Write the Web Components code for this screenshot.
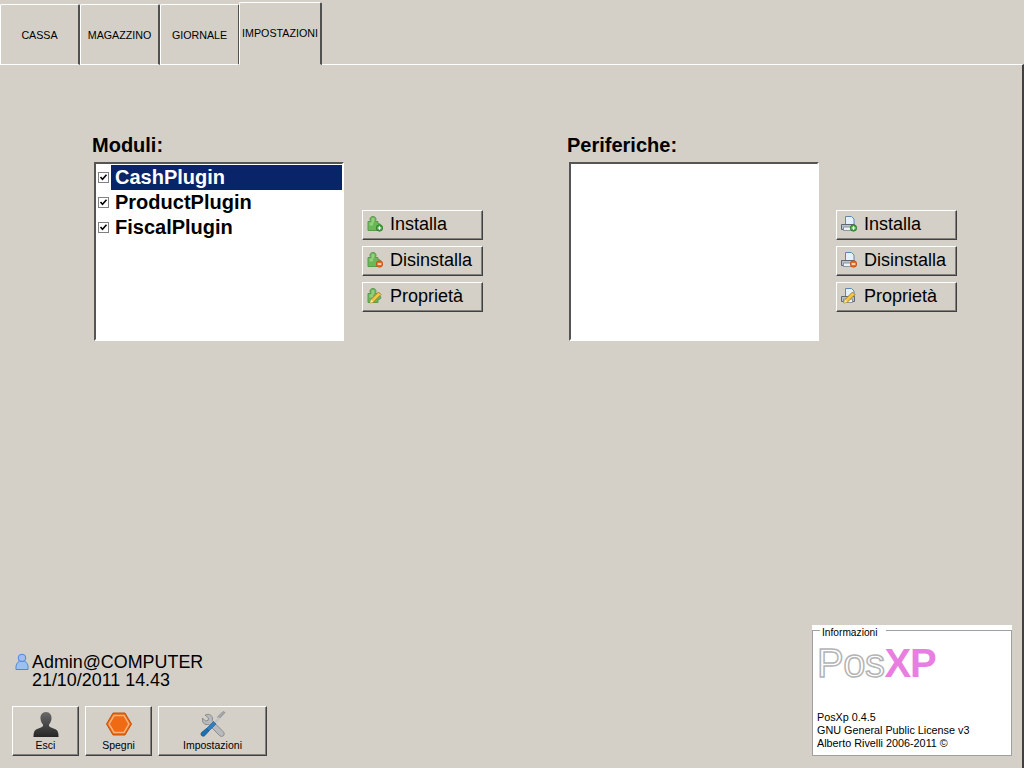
<!DOCTYPE html>
<html>
<head>
<meta charset="utf-8">
<title>PosXp</title>
<style>
    html, body { margin: 0; height: 100%; background: #d4d0c8; overflow: hidden; }
    body { font-family: "Liberation Sans", Arial, sans-serif; color: #000; }
</style>
</head>
<body>

<pos-app>
    <pos-tabs slot="tabs">
        <pos-tab>CASSA</pos-tab>
        <pos-tab>MAGAZZINO</pos-tab>
        <pos-tab>GIORNALE</pos-tab>
        <pos-tab active>IMPOSTAZIONI</pos-tab>
    </pos-tabs>

    <pos-section slot="left" heading="Moduli:">
        <pos-listbox slot="list">
            <pos-list-item selected>CashPlugin</pos-list-item>
            <pos-list-item>ProductPlugin</pos-list-item>
            <pos-list-item>FiscalPlugin</pos-list-item>
        </pos-listbox>
        <pos-button slot="actions" icon="plugin-add">Installa</pos-button>
        <pos-button slot="actions" icon="plugin-del">Disinstalla</pos-button>
        <pos-button slot="actions" icon="plugin-edit">Proprietà</pos-button>
    </pos-section>

    <pos-section slot="right" heading="Periferiche:" style="--actions-gap:17px">
        <pos-listbox slot="list"></pos-listbox>
        <pos-button slot="actions" icon="printer-add">Installa</pos-button>
        <pos-button slot="actions" icon="printer-del">Disinstalla</pos-button>
        <pos-button slot="actions" icon="printer-edit">Proprietà</pos-button>
    </pos-section>

    <pos-status slot="status" user="Admin@COMPUTER" date="21/10/2011 14.43">
        <pos-tool-button icon="user" style="width:67px">Esci</pos-tool-button>
        <pos-tool-button icon="power" style="width:67px">Spegni</pos-tool-button>
        <pos-tool-button icon="tools" style="width:109px">Impostazioni</pos-tool-button>
    </pos-status>

    <pos-info slot="info"></pos-info>
</pos-app>

<script>
const puzzle = `<path d="M1 5.500h2.800c-.8-1.200-1-2.200-.6-3.300.4-1.100 1.500-1.700 2.800-1.700s2.400.6 2.800 1.700c.4 1.100.2 2.100-.6 3.300h2.800v2.500c1-.6 2.800-.5 2.800 1.500s-1.800 2.100-2.800 1.500v3.500h-10z" fill="#6ab858" stroke="#5a9a4c"/>
    <path d="M4.500 2.500c.5-.8 2.500-.8 3 0l-.3 4h-1.200v3h-3.500v-3h2z" fill="#a6d98f" opacity=".7"/>`
const printer = `<path d="M4.500 .5h6l2.500 2.500v6h-8.500z" fill="#e6f0fb" stroke="#5c86bd"/>
    <path d="M.500 8.500h13v5h-13z" fill="#b9c2cf" stroke="#5f6775"/>
    <path d="M2.500 11h9v3.500h-9z" fill="#eef1f5" stroke="#7a808c" stroke-width=".8"/>`
const addBadge = `<circle cx="12.500" cy="12" r="3.200" fill="#43a63a" stroke="#2b7a28" stroke-width=".8"/><path d="M10.700 12h3.600M12.500 10.200v3.600" stroke="#fff" stroke-width="1.200"/>`
const delBadge = `<circle cx="12.500" cy="12" r="3.200" fill="#ef6a1c" stroke="#bf4c0c" stroke-width=".8"/><path d="M10.700 12h3.600" stroke="#fff" stroke-width="1.400"/>`
const pencil = `<path d="M3 15l1-3.500 7.500-7.500 2.500 2.500-7.500 7.500z" fill="#f3c646" stroke="#a27a1c" stroke-width=".9"/><path d="M3 15l1-3.500 2.500 2.500z" fill="#fbe7b5"/>`

const icons16 = {
    'plugin-add': puzzle + addBadge,
    'plugin-del': puzzle + delBadge,
    'plugin-edit': puzzle + pencil,
    'printer-add': printer + addBadge,
    'printer-del': printer + delBadge,
    'printer-edit': printer + pencil,
}

const icons26 = {
    user: `<defs><linearGradient id="u" x1="0" y1="0" x2="0" y2="1"><stop offset="0" stop-color="#6a6a6a"/><stop offset="1" stop-color="#262626"/></linearGradient></defs>
        <path d="M13 1c3.800 0 5.800 3 5.500 6.500-.2 2.300-1 4.500-2.500 6v1.500c1 1.500 4 2 6.500 3.200 2 1 3 2.800 3 7.800h-25c0-5 1-6.800 3-7.800 2.500-1.200 5.500-1.700 6.500-3.200v-1.500c-1.500-1.500-2.300-3.700-2.500-6-.3-3.500 1.700-6.500 5.500-6.500z" fill="url(#u)"/>`,
    power: `<path d="M7 2h12l6.500 11-6.500 11h-12l-6.500-11z" fill="#e9650f" stroke="#c95207"/>
        <path d="M8 4.500h10l5 8.500-5 8.500h-10l-5-8.500z" fill="#ef6a12" stroke="#f9b27c" stroke-width="1.500"/>`,
    tools: `<path d="M5 4l3.500 3-.5 2.500-2.500.5-3-3c-.5 3 .5 6 3.500 6.500 1 .2 2 0 2.500-.2l11 11.200c1 1 3 1.200 4 .2s.8-3-.2-4l-11-11c.5-2 .2-4-1.500-5.500-1.500-1.200-3.500-1.200-5.300-.2z" fill="#b8babd" stroke="#7b7d80" stroke-width=".8"/>
        <path d="M25 1.500l-2-1-5.500 5.500 1.500 2z" fill="#a8aaae" stroke="#77797c" stroke-width=".6"/>
        <path d="M18.500 6l2 2-5 5-2-2z" fill="#c3c5c8"/>
        <path d="M13.500 10.500l2.500 2.500-7 7-2.500-2.500z" fill="#2f7fbf" stroke="#1c5a8f" stroke-width=".6"/>
        <path d="M6.500 17.500l2.500 2.500-4 4.500c-1 1-2.500 1-3.500 0s-.5-2.500.3-3.300z" fill="#1f6fb0" stroke="#124b7d" stroke-width=".6"/>`,
}

class PosApp extends HTMLElement {
    constructor() {
        super()
        this.attachShadow({ mode: 'open' })
        this.shadowRoot.innerHTML = `
            <style>
                :host { display: flex; flex-direction: column; width: 1024px; height: 768px; box-sizing: border-box; }
                .pane {
                    flex: 1;
                    display: flex;
                    flex-direction: column;
                    margin-top: -1px;
                    border-top: 1px solid #fff;
                    border-right: 2px solid #404040;
                    box-sizing: border-box;
                }
                .sections { display: flex; padding: 67px 0 0 92px; gap: 84px; }
                .footer { margin-top: auto; display: flex; justify-content: space-between; align-items: flex-end; padding: 0 10px 12px 12px; }
            </style>
            <slot name="tabs"></slot>
            <div class="pane">
                <div class="sections">
                    <slot name="left"></slot>
                    <slot name="right"></slot>
                </div>
                <div class="footer">
                    <slot name="status"></slot>
                    <slot name="info"></slot>
                </div>
            </div>
        `
    }
}

class PosTabs extends HTMLElement {
    constructor() {
        super()
        this.attachShadow({ mode: 'open' })
        this.shadowRoot.innerHTML = `
            <style>
                :host { display: flex; height: 65px; align-items: flex-end; position: relative; z-index: 1; }
            </style>
            <slot></slot>
        `
    }
}

class PosTab extends HTMLElement {
    constructor() {
        super()
        this.attachShadow({ mode: 'open' })
        this.shadowRoot.innerHTML = `
            <style>
                :host {
                    display: flex;
                    align-items: center;
                    justify-content: center;
                    box-sizing: border-box;
                    width: 80px;
                    height: 61px;
                    border-top: 1px solid #fff;
                    border-left: 1px solid #fff;
                    border-right: 2px solid #505050;
                    border-bottom: 1px solid #fff;
                    border-top-left-radius: 2px;
                    border-top-right-radius: 2px;
                    font: 10.700px "Liberation Sans", Arial, sans-serif;
                    white-space: nowrap;
                }
                :host([active]) {
                    width: 83px;
                    height: 63px;
                    margin-left: -1px;
                    border-bottom-color: #d4d0c8;
                    padding-bottom: 2px;
                }
            </style>
            <slot></slot>
        `
    }
}

class PosSection extends HTMLElement {
    constructor() {
        super()
        this.attachShadow({ mode: 'open' })
        this.shadowRoot.innerHTML = `
            <style>
                :host { display: block; width: 391px; }
                h2 { margin: 0; height: 30px; font: bold 20px/26px "Liberation Sans", Arial, sans-serif; }
                .body { display: flex; gap: var(--actions-gap, 18px); padding-left: 2px; align-items: flex-start; }
                .actions { display: flex; flex-direction: column; gap: 6px; padding-top: 48px; }
            </style>
            <h2></h2>
            <div class="body">
                <slot name="list"></slot>
                <div class="actions"><slot name="actions"></slot></div>
            </div>
        `
    }

    connectedCallback() {
        this.shadowRoot.querySelector('h2').textContent = this.getAttribute('heading')
    }
}

class PosListbox extends HTMLElement {
    constructor() {
        super()
        this.attachShadow({ mode: 'open' })
        this.shadowRoot.innerHTML = `
            <style>
                :host {
                    display: block;
                    box-sizing: border-box;
                    width: 250px;
                    height: 179px;
                    background: #fff;
                    border: 2px solid;
                    border-color: #555 #fff #fff #555;
                    padding: 1px 0 0 0;
                }
            </style>
            <slot></slot>
        `
    }
}

class PosListItem extends HTMLElement {
    constructor() {
        super()
        this.attachShadow({ mode: 'open' })
        this.shadowRoot.innerHTML = `
            <style>
                :host { display: flex; height: 25px; align-items: center; font: bold 20px "Liberation Sans", Arial, sans-serif; white-space: nowrap; }
                .check { flex: none; margin: 0 2px 0 2px; width: 11px; height: 11px; box-sizing: border-box; border: 1px solid #808080; background: #fff; display: flex; }
                .label { flex: 1; padding-left: 4px; line-height: 25px; }
                :host([selected]) .label { background: #0a246a; color: #fff; }
            </style>
            <span class="check"><svg width="9" height="9" viewBox="0 0 9 9"><path d="M1.500 4l2 2.200 4-4.400" fill="none" stroke="#000" stroke-width="1.600"/></svg></span>
            <span class="label"><slot></slot></span>
        `
    }
}

class PosButton extends HTMLElement {
    constructor() {
        super()
        this.attachShadow({ mode: 'open' })
        this.shadowRoot.innerHTML = `
            <style>
                :host {
                    display: flex;
                    align-items: center;
                    box-sizing: border-box;
                    width: 121px;
                    height: 30px;
                    padding: 0 0 2px 4px;
                    gap: 7px;
                    border: 1px solid;
                    border-color: #fff #404040 #404040 #fff;
                    box-shadow: inset -1px -1px 0 #808080;
                    font: 18px "Liberation Sans", Arial, sans-serif;
                    white-space: nowrap;
                }
                svg { flex: none; }
            </style>
            <svg width="16" height="16" viewBox="0 0 16 16"></svg>
            <slot></slot>
        `
    }

    connectedCallback() {
        this.shadowRoot.querySelector('svg').innerHTML = icons16[this.getAttribute('icon')]
    }
}

class PosToolButton extends HTMLElement {
    constructor() {
        super()
        this.attachShadow({ mode: 'open' })
        this.shadowRoot.innerHTML = `
            <style>
                :host {
                    display: flex;
                    flex-direction: column;
                    align-items: center;
                    box-sizing: border-box;
                    height: 50px;
                    padding-top: 4px;
                    border: 1px solid;
                    border-color: #fff #404040 #404040 #fff;
                    box-shadow: inset -1px -1px 0 #808080;
                    font: 10.500px/14px "Liberation Sans", Arial, sans-serif;
                    white-space: nowrap;
                }
                svg { flex: none; margin-bottom: 1px; }
            </style>
            <svg width="26" height="26" viewBox="0 0 26 26"></svg>
            <slot></slot>
        `
    }

    connectedCallback() {
        this.shadowRoot.querySelector('svg').innerHTML = icons26[this.getAttribute('icon')]
    }
}

class PosStatus extends HTMLElement {
    constructor() {
        super()
        this.attachShadow({ mode: 'open' })
        this.shadowRoot.innerHTML = `
            <style>
                :host { display: block; }
                .who { display: flex; gap: 3px; padding-left: 3px; font: 17.900px/18px "Liberation Sans", Arial, sans-serif; }
                .buttons { display: flex; gap: 6px; margin-top: 17px; }
                svg { flex: none; }
            </style>
            <div class="who">
                <svg width="14" height="18" viewBox="0 0 14 18">
                    <circle cx="7" cy="5" r="3.800" fill="#9cc0f0" stroke="#4f86dc"/>
                    <path d="M1 16.500c-.5-5 1.500-7.500 3.500-8.200h5c2 .7 4 3.200 3.500 8.200z" fill="#9cc0f0" stroke="#4f86dc"/>
                </svg>
                <div><span id="user"></span><br><span id="date"></span></div>
            </div>
            <div class="buttons"><slot></slot></div>
        `
    }

    connectedCallback() {
        this.shadowRoot.querySelector('#user').textContent = this.getAttribute('user')
        this.shadowRoot.querySelector('#date').textContent = this.getAttribute('date')
    }
}

class PosInfo extends HTMLElement {
    constructor() {
        super()
        this.attachShadow({ mode: 'open' })
        this.shadowRoot.innerHTML = `
            <style>
                :host {
                    display: block;
                    box-sizing: border-box;
                    width: 200px;
                    height: 131px;
                    background: #fff;
                    padding-top: 5px;
                    font: 10.800px/13px "Liberation Sans", Arial, sans-serif;
                }
                .box {
                    box-sizing: border-box;
                    height: 126px;
                    border: 1px solid #a0a0a0;
                    position: relative;
                    padding: 10px 0 0 4px;
                }
                .legend { position: absolute; left: 7px; top: -4px; padding: 0 8px 0 2px; background: #fff; font-size: 10.200px; line-height: 12px; }
                .logo { font: 40px/44px "Liberation Sans", Arial, sans-serif; height: 70px; letter-spacing: -.5px; }
                .pos { color: #fff; -webkit-text-stroke: 1.500px #b4b4b4; }
                .xp { color: #e87fe0; font-weight: bold; letter-spacing: -1px; }
            </style>
            <div class="box">
                <span class="legend">Informazioni</span>
                <div class="logo"><span class="pos">Pos</span><span class="xp">XP</span></div>
                <div>PosXp 0.4.5</div>
                <div>GNU General Public License v3</div>
                <div>Alberto Rivelli 2006-2011 ©</div>
            </div>
        `
    }
}

customElements.define('pos-app', PosApp)
customElements.define('pos-tabs', PosTabs)
customElements.define('pos-tab', PosTab)
customElements.define('pos-section', PosSection)
customElements.define('pos-listbox', PosListbox)
customElements.define('pos-list-item', PosListItem)
customElements.define('pos-button', PosButton)
customElements.define('pos-tool-button', PosToolButton)
customElements.define('pos-status', PosStatus)
customElements.define('pos-info', PosInfo)
</script>
</body>
</html>
